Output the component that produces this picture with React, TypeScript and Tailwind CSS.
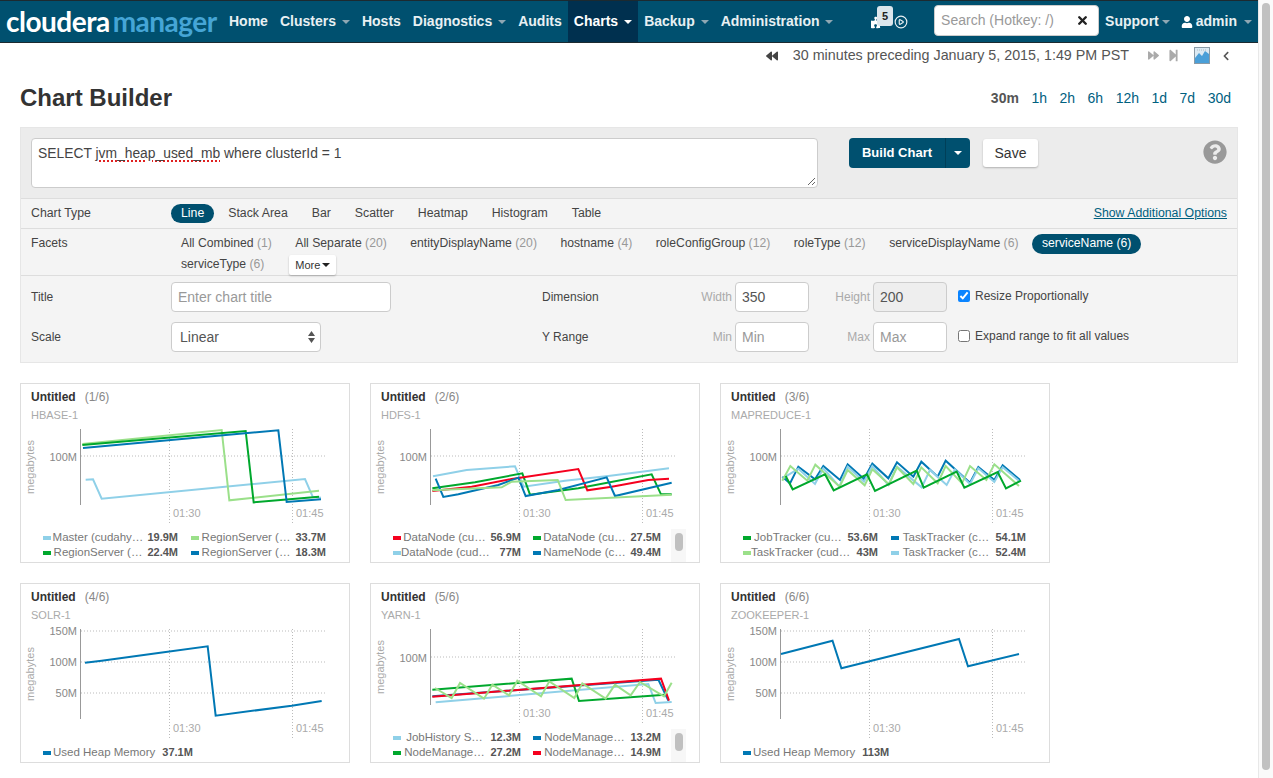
import React from "react";
import { CirclePlay, X } from "lucide-react";
import { FaBackward, FaForward, FaStepForward, FaChevronLeft, FaUser, FaQuestionCircle, FaPuzzlePiece } from "react-icons/fa";

const LB = "#8fd0e8", LG = "#9be08a", G = "#00a82d", B = "#0078b4", R = "#f5001e";

type Leg = { c: string; l: string; v: string };
type Line = { c: string; p: number[][] };
type Chart = {
  n: number; sub: string; lines: Line[]; legend: Leg[]; ticks: [string, number][]; axisEnd: number;
  vEnd: number; labelY: number; off: number; scroll?: boolean; raw?: boolean;
};

const charts: Chart[] = [
  {
    n: 1, sub: "HBASE-1", off: -3, axisEnd: 122, vEnd: 141, labelY: 130, ticks: [["100M", 73]],
    lines: [
      { c: LB, p: [[212,299],[234,298],[260,356],[870,297],[893,350],[918,353]] },
      { c: LG, p: [[202,192],[620,150],[643,361],[912,332]] },
      { c: G, p: [[202,195],[692,153],[716,367],[912,350]] },
      { c: B, p: [[204,204],[790,151],[815,366],[918,358]] },
    ],
    legend: [
      { c: LB, l: "Master (cudahy…", v: "19.9M" },
      { c: LG, l: "RegionServer (…", v: "33.7M" },
      { c: G, l: "RegionServer (…", v: "22.4M" },
      { c: B, l: "RegionServer (…", v: "18.3M" },
    ],
  },
  {
    n: 2, sub: "HDFS-1", off: -3, axisEnd: 122, vEnd: 141, labelY: 130, ticks: [["100M", 73]], scroll: true,
    lines: [
      { c: LB, p: [[204,289],[305,270],[450,259],[476,320],[600,302],[730,288],[912,265]] },
      { c: G, p: [[202,325],[330,307],[472,280],[495,344],[640,325],[860,283],[888,343],[920,343]] },
      { c: R, p: [[202,333],[320,320],[440,297],[640,267],[667,331],[740,320],[850,300],[912,296]] },
      { c: B, p: [[212,296],[235,351],[280,343],[400,315],[460,293],[482,348],[580,330],[725,292],[750,348],[920,308]] },
      { c: LG, p: [[202,331],[410,322],[440,305],[578,300],[602,360],[920,344]] },
    ],
    legend: [
      { c: R, l: "DataNode (cu…", v: "56.9M" },
      { c: G, l: "DataNode (cu…", v: "27.5M" },
      { c: LB, l: "DataNode (cud…", v: "77M" },
      { c: B, l: "NameNode (c…", v: "49.4M" },
    ],
  },
  {
    n: 3, sub: "MAPREDUCE-1", off: -3, axisEnd: 122, vEnd: 141, labelY: 130, ticks: [["100M", 73]],
    lines: [
      { c: B, p: [[202,290],[225,310],[250,260],[300,298],[325,258],[375,300],[398,253],[447,297],[472,251],[520,295],[546,247],[595,290],[619,245],[668,290],[692,242],[765,308],[790,261],[838,300],[863,256],[915,300]] },
      { c: LB, p: [[202,296],[250,266],[300,312],[325,265],[373,320],[398,260],[447,305],[472,258],[520,315],[546,260],[620,322],[645,270],[695,315],[720,268],[765,312],[790,265],[838,306],[863,262],[915,305]] },
      { c: LG, p: [[202,302],[226,258],[277,302],[301,254],[374,320],[398,270],[449,316],[472,268],[522,313],[546,262],[595,312],[619,262],[668,310],[692,258],[741,310],[765,258],[814,300],[838,253],[912,318]] },
      { c: G, p: [[212,288],[233,328],[330,283],[356,331],[456,283],[480,333],[605,272],[626,323],[725,275],[748,323],[848,276],[873,325],[918,302]] },
    ],
    legend: [
      { c: G, l: "JobTracker (cu…", v: "53.6M" },
      { c: B, l: "TaskTracker (c…", v: "54.1M" },
      { c: LG, l: "TaskTracker (cud…", v: "43M" },
      { c: LB, l: "TaskTracker (c…", v: "52.4M" },
    ],
  },
  {
    n: 4, sub: "SOLR-1", off: -5, axisEnd: 136, vEnd: 156, labelY: 145, ticks: [["150M", 48], ["100M", 79], ["50M", 110]],
    lines: [{ c: B, p: [[210,254],[260,248],[430,225],[578,205],[602,413],[830,383],[920,369]] }],
    legend: [{ c: B, l: "Used Heap Memory", v: "37.1M" }],
  },
  {
    n: 5, sub: "YARN-1", off: -5, axisEnd: 122, vEnd: 141, labelY: 130, ticks: [["100M", 74]], scroll: true,
    lines: [
      { c: LB, p: [[212,373],[850,318],[872,375],[920,372]] },
      { c: B, p: [[202,355],[880,305],[910,368]] },
      { c: G, p: [[202,335],[620,302],[642,369],[900,350]] },
      { c: R, p: [[202,356],[888,302],[912,368]] },
      { c: LG, p: [[210,330],[260,360],[285,315],[357,362],[382,320],[432,352],[457,308],[528,355],[553,310],[628,360],[652,316],[722,362],[750,320],[797,352],[825,312],[897,355],[920,314]] },
    ],
    legend: [
      { c: LB, l: "JobHistory S…", v: "12.3M" },
      { c: B, l: "NodeManage…", v: "13.2M" },
      { c: G, l: "NodeManage…", v: "27.2M" },
      { c: R, l: "NodeManage…", v: "14.9M" },
    ],
  },
  {
    n: 6, sub: "ZOOKEEPER-1", off: 0, raw: true, axisEnd: 136, vEnd: 156, labelY: 145, ticks: [["150M", 48], ["100M", 79], ["50M", 110]],
    lines: [{ c: B, p: [[61,71],[112.5,57.7],[121.4,85.3],[239,56],[248,83.3],[299,71]] }],
    legend: [{ c: B, l: "Used Heap Memory", v: "113M" }],
  },
];

function Caret({ light }: { light?: boolean }) {
  return (
    <span className={light
      ? "ml-[6px] inline-block h-0 w-0 border-x-4 border-t-4 border-x-transparent border-t-white"
      : "ml-[6px] inline-block h-0 w-0 border-x-4 border-t-4 border-x-transparent border-t-[#8fa7b3]"} />
  );
}

function NavItem({ label, caret, active }: { label: string; caret?: boolean; active?: boolean }) {
  return (
    <div className={active
      ? "flex h-[41px] items-center bg-[#00304f] px-[6px] text-white"
      : "flex h-[41px] items-center px-[6px] text-[#e8f0f3]"}>
      <span>{label}</span>
      {caret && <Caret light={active} />}
    </div>
  );
}

function Navbar() {
  return (
    <header className="flex h-[43px] items-center border-y border-y-[#1c2a30] bg-[#00506f] text-[14px] font-bold">
      <div className="ml-[6px] mr-[6px] flex w-[211px] shrink-0 items-baseline whitespace-nowrap font-['Lato',sans-serif] text-[28px] font-bold leading-[39px] tracking-[-0.5px]">
        <span className="text-white">cloudera</span>
        <span className="ml-[3px] text-[#45a5d6]">manager</span>
      </div>
      <nav className="flex items-center">
        <NavItem label="Home" />
        <NavItem label="Clusters" caret />
        <NavItem label="Hosts" />
        <NavItem label="Diagnostics" caret />
        <NavItem label="Audits" />
        <NavItem label="Charts" caret active />
        <NavItem label="Backup" caret />
        <NavItem label="Administration" caret />
      </nav>
      <div className="flex-1" />
      <div className="relative flex w-[23px] shrink-0 items-center text-white">
        <FaPuzzlePiece size={13} className="mt-[2px]" />
        <span className="absolute left-[6px] top-[-8px] flex h-[20px] w-[16px] items-center justify-center rounded-[3px] bg-[#dbe6ec] text-[11px] text-[#222]">5</span>
      </div>
      <CirclePlay size={14} strokeWidth={2} className="mr-[26px] shrink-0 text-[#e8f0f3]" />
      <div className="mb-[3px] flex h-[31px] w-[165px] shrink-0 items-center justify-between rounded-[4px] border border-[#ccc] bg-white pl-[6px] pr-[9px] font-normal text-[#999]">
        <span>Search (Hotkey: /)</span>
        <X size={13} strokeWidth={4.5} className="text-[#222]" />
      </div>
      <span className="ml-[6px] text-[#e8f0f3]">Support</span>
      <span className="ml-[3px] inline-block h-0 w-0 border-x-4 border-t-4 border-x-transparent border-t-[#8fa7b3]" />
      <FaUser size={12} className="ml-[11px] text-white" />
      <span className="ml-[3px] text-[#e8f0f3]">admin</span>
      <span className="ml-[7px] mr-[6px] inline-block h-0 w-0 border-x-4 border-t-4 border-x-transparent border-t-[#8fa7b3]" />
    </header>
  );
}

function TimeBar() {
  return (
    <div className="flex h-[24px] items-center justify-end pr-[27px] pt-[1px] text-[14.3px] text-[#555]">
      <FaBackward size={12} className="text-[#444]" />
      <span className="ml-[15px]">30 minutes preceding January 5, 2015, 1:49 PM PST</span>
      <FaForward size={11} className="ml-[19px] text-[#aaa]" />
      <FaStepForward size={13} className="ml-[8px] text-[#aaa]" />
      <svg width="16" height="17" viewBox="0 0 16 17" className="ml-[14px]">
        <rect x="0.5" y="0.5" width="15" height="16" fill="#dceaf3" stroke="#8a9aa6" />
        <path d="M1 11 L5 6 L8 9 L11 4 L15 7 L15 16 L1 16 Z" fill="#4a9fd8" />
        <path d="M3 3 H13" stroke="#b0bcc4" strokeDasharray="1 1" />
      </svg>
      <FaChevronLeft size={10} className="ml-[11px] text-[#555]" />
    </div>
  );
}

function TitleRow() {
  const ranges = ["1h", "2h", "6h", "12h", "1d", "7d", "30d"];
  return (
    <div className="flex h-[60px] items-center justify-between pl-[20px] pr-[27px] pt-[2px]">
      <h1 className="text-[24px] font-bold text-[#333]">Chart Builder</h1>
      <div className="flex items-center gap-[12.5px] text-[14px] text-[#00607f]">
        <span className="font-bold text-[#555]">30m</span>
        {ranges.map((r) => <span key={r}>{r}</span>)}
      </div>
    </div>
  );
}

function QueryRow() {
  return (
    <div className="flex h-[71px] border-b border-b-[#ddd] bg-[#ececec] pl-[11px] pr-[11px] pt-[10px]">
      <div className="relative h-[50px] w-[787px] rounded-[4px] border border-[#ccc] bg-white px-[6px] py-[5px] text-[13.85px] leading-[18px] text-[#444]">
        SELECT <span className="underline decoration-[#e02020] decoration-dotted decoration-2 underline-offset-2">jvm_heap_used_mb</span> where clusterId = 1
        <svg width="9" height="9" viewBox="0 0 9 9" className="absolute bottom-[1px] right-[1px]">
          <path d="M1 8 L8 1 M5 8 L8 5" stroke="#666" strokeWidth="1" />
        </svg>
      </div>
      <div className="ml-[31px] flex h-[30px] w-[121px] items-center rounded-[4px] bg-[#00506f] text-[13px] font-bold text-white">
        <span className="flex h-full w-[96px] items-center justify-center">Build Chart</span>
        <span className="flex h-full flex-1 items-center justify-center border-l border-l-[#003f58]">
          <span className="inline-block h-0 w-0 border-x-4 border-t-4 border-x-transparent border-t-white" />
        </span>
      </div>
      <div className="ml-[13px] mt-[1px] flex h-[28px] w-[55px] items-center justify-center rounded-[3px] bg-white text-[14px] text-[#333] shadow-[0_1px_2px_rgba(0,0,0,0.25)]">Save</div>
      <div className="flex-1" />
      <FaQuestionCircle size={24} className="mt-[2px] text-[#999]" />
    </div>
  );
}

function ChartTypeRow() {
  const types = ["Stack Area", "Bar", "Scatter", "Heatmap", "Histogram", "Table"];
  return (
    <div className="flex h-[30px] items-center border-b border-b-[#ddd] px-[11px] pb-[1px] text-[12.3px] text-[#444]">
      <span className="w-[140px]">Chart Type</span>
      <span className="flex h-[19px] items-center rounded-full bg-[#00506f] px-[10px] text-white">Line</span>
      <div className="ml-[4px] flex gap-[4px]">
        {types.map((t) => <span key={t} className="px-[10px]">{t}</span>)}
      </div>
      <div className="flex-1" />
      <span className="text-[#00607f] underline">Show Additional Options</span>
    </div>
  );
}

function Facet({ label, count, active }: { label: string; count: string; active?: boolean }) {
  return active ? (
    <span className="flex h-[20px] items-center rounded-full bg-[#00506f] px-[10px] pb-[1px] text-white">{label} ({count})</span>
  ) : (
    <span className="flex h-[20px] items-center px-[10px] pb-[1px]">{label}&nbsp;<span className="text-[#999]">({count})</span></span>
  );
}

function FacetsRow() {
  return (
    <div className="flex h-[47px] border-b border-b-[#ddd] px-[11px] pt-[5px] text-[12.2px] text-[#444]">
      <span className="w-[140px] leading-[19px]">Facets</span>
      <div className="flex flex-col gap-[1px]">
        <div className="flex gap-[3.5px]">
          <Facet label="All Combined" count="1" />
          <Facet label="All Separate" count="20" />
          <Facet label="entityDisplayName" count="20" />
          <Facet label="hostname" count="4" />
          <Facet label="roleConfigGroup" count="12" />
          <Facet label="roleType" count="12" />
          <Facet label="serviceDisplayName" count="6" />
          <Facet label="serviceName" count="6" active />
        </div>
        <div className="flex">
          <Facet label="serviceType" count="6" />
          <span className="ml-[15px] flex h-[20px] w-[47px] items-center justify-center gap-[2px] rounded-[2px] bg-white text-[11px] text-[#333] shadow-[0_1px_2px_rgba(0,0,0,0.25)]">
            More
            <span className="inline-block h-0 w-0 border-x-4 border-t-4 border-x-transparent border-t-[#222]" />
          </span>
        </div>
      </div>
    </div>
  );
}

const inputBase = "h-[30px] rounded-[4px] border border-[#ccc] px-[6px] text-[14px] text-[#555] outline-none placeholder:text-[#999]";

function LabeledInput({ label, value, placeholder, disabled }: { label: string; value?: string; placeholder?: string; disabled?: boolean }) {
  return (
    <div className="flex items-center justify-end gap-[3px]">
      <span className="text-[12px] text-[#aaa]">{label}</span>
      <input
        className={disabled ? `${inputBase} w-[74px] bg-[#eeeeee]` : `${inputBase} w-[74px] bg-white`}
        defaultValue={value}
        placeholder={placeholder}
        disabled={disabled}
      />
    </div>
  );
}

function FormRow() {
  return (
    <div className="grid h-[86px] grid-cols-[140px_371px_122px_145px_138px_1fr] content-start gap-y-[10px] px-[11px] pt-[6px] text-[12px] text-[#444]">
      <span className="self-center">Title</span>
      <input className={`${inputBase} w-[220px] bg-white`} placeholder="Enter chart title" />
      <span className="self-center">Dimension</span>
      <LabeledInput label="Width" value="350" />
      <LabeledInput label="Height" value="200" disabled />
      <label className="ml-[11px] flex items-center gap-[5px] self-start pt-[5px]">
        <input type="checkbox" defaultChecked className="h-[12px] w-[12px] accent-[#0a84ff]" />
        Resize Proportionally
      </label>

      <span className="self-center">Scale</span>
      <div className="relative w-[150px]">
        <select className="h-[30px] w-full appearance-none rounded-[4px] border border-[#ccc] bg-white px-[8px] text-[14px] text-[#555] outline-none">
          <option>Linear</option>
        </select>
        <svg width="7" height="12" viewBox="0 0 7 12" className="pointer-events-none absolute right-[6px] top-[9px]">
          <path d="M3.5 0 L7 5 H0 Z M0 7 H7 L3.5 12 Z" fill="#555" />
        </svg>
      </div>
      <span className="self-center">Y Range</span>
      <LabeledInput label="Min" placeholder="Min" />
      <LabeledInput label="Max" placeholder="Max" />
      <label className="ml-[11px] flex items-center gap-[5px] self-start pt-[5px]">
        <input type="checkbox" className="h-[12px] w-[12px] accent-[#0a84ff]" />
        Expand range to fit all values
      </label>
    </div>
  );
}

function Plot({ c }: { c: Chart }) {
  const h = c.legend.length === 1 ? 120 : 105;
  const dy = c.ticks.length === 1 ? 5 : 4;
  const toCard = (p: number[]) => (c.raw ? p : [p[0] / 3 - 5, p[1] / 3 + c.off]);
  return (
    <svg width="328" height={h} viewBox={`1 41 328 ${h}`} className="block">
      {c.ticks.map(([t, y]) => (
        <g key={t}>
          <line x1="61" x2="306" y1={y} y2={y} stroke="#bbb" strokeDasharray="1 2" />
          <text x="57" y={y + dy} textAnchor="end" fontSize="11" fill="#888">{t}</text>
        </g>
      ))}
      {[149.5, 272.5].map((x) => (
        <line key={x} x1={x} x2={x} y1="46" y2={c.vEnd} stroke="#bbb" strokeDasharray="1 2" />
      ))}
      <line x1="60.5" x2="60.5" y1="46" y2={c.axisEnd} stroke="#999" />
      <text x="153" y={c.labelY + 4} fontSize="11" fill="#aaa">01:30</text>
      <text x="276" y={c.labelY + 4} fontSize="11" fill="#aaa">01:45</text>
      <text transform={`translate(14 ${(46 + c.axisEnd) / 2}) rotate(-90)`} textAnchor="middle" fontSize="11" fill="#aaa">megabytes</text>
      {c.lines.map((l, i) => (
        <polyline key={i} points={l.p.map((p) => toCard(p).join(",")).join(" ")} fill="none" stroke={l.c} strokeWidth="2" />
      ))}
    </svg>
  );
}

function LegendItem({ it }: { it: Leg }) {
  return (
    <div className="flex h-[15px] items-center">
      <span className="h-[4px] w-[8px] shrink-0" style={{ backgroundColor: it.c }} />
      <span className="min-w-0 flex-1 whitespace-nowrap text-center text-[11.5px] text-[#777]">{it.l}</span>
      <span className="w-[33px] shrink-0 text-right text-[11px] font-bold text-[#555]">{it.v}</span>
    </div>
  );
}

function Legend({ c }: { c: Chart }) {
  if (c.legend.length === 1) {
    const it = c.legend[0];
    return (
      <div className="mt-[1px] flex h-[15px] items-center pl-[22px]">
        <span className="h-[4px] w-[8px]" style={{ backgroundColor: it.c }} />
        <span className="ml-[2px] whitespace-nowrap text-[11.5px] text-[#777]">{it.l}</span>
        <span className="ml-[7px] text-[11px] font-bold text-[#555]">{it.v}</span>
      </div>
    );
  }
  return (
    <div className="flex h-[33px] pl-[22px]">
      <div className={c.scroll
        ? "mt-[1px] grid h-[30px] grid-cols-[128px_128px] gap-x-[12px]"
        : "mt-[1px] grid h-[30px] grid-cols-[135px_135px] gap-x-[13px]"}>
        {c.legend.map((it, i) => <LegendItem key={i} it={it} />)}
      </div>
      {c.scroll && (
        <div className="ml-[10px] h-[33px] w-[15px] bg-[#f7f7f7] px-[4px] pt-[4px]">
          <div className="h-[18px] w-[8px] rounded-full bg-[#c0c0c0]" />
        </div>
      )}
    </div>
  );
}

function ChartCard({ c }: { c: Chart }) {
  return (
    <div className="h-[180px] w-[330px] overflow-hidden border border-[#ddd] bg-white">
      <div className="h-[40px] pl-[10px] pt-[5px]">
        <div className="flex h-[15px] items-center text-[12px]">
          <span className="font-bold text-[#333]">Untitled</span>
          <span className="ml-[9px] text-[#888]">({c.n}/6)</span>
        </div>
        <div className="mt-[4px] text-[11px] leading-[15px] text-[#aaa]">{c.sub}</div>
      </div>
      <Plot c={c} />
      <Legend c={c} />
    </div>
  );
}

export default function App() {
  return (
    <div className="flex h-[778px] w-full overflow-hidden bg-white font-['Liberation_Sans',Arial,sans-serif]">
      <div className="w-[1258px] shrink-0">
        <Navbar />
        <TimeBar />
        <TitleRow />
        <section className="mx-[20px] w-[1218px] border-y border-y-[#ddd] bg-[#f4f4f4] outline-1 -outline-offset-1 outline-[#e6e6e6]">
          <QueryRow />
          <ChartTypeRow />
          <FacetsRow />
          <FormRow />
        </section>
        <section className="mx-[20px] mt-[20px] grid grid-cols-[repeat(3,330px)] gap-x-[20px] gap-y-[20px]">
          {charts.map((c) => <ChartCard key={c.n} c={c} />)}
        </section>
      </div>
      <div className="flex-1 border-l border-l-[#e8e8e8] bg-[#fafafa] pl-[3px] pt-[3px]">
        <div className="h-[767px] w-[8px] rounded-full bg-[#c1c1c1]" />
      </div>
    </div>
  );
}
